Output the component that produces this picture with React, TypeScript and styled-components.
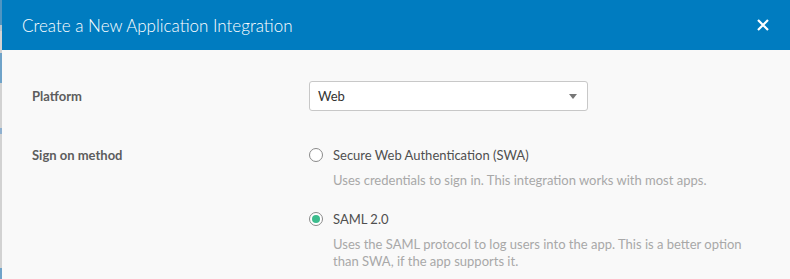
import { createGlobalStyle } from "styled-components";
import styled from "styled-components";

const GlobalStyle = createGlobalStyle`
  html, body {
    margin: 0;
    padding: 0;
    background: #f9f9f9;
    font-family: Lato, "Liberation Sans", sans-serif;
  }
`;

const Page = styled.div`
  display: flex;
  height: 279px;
  overflow: hidden;
`;

const Backdrop = styled.div`
  width: 2px;
  flex: none;
  background: linear-gradient(
    #4f95c2 0 25px,
    #b9c3cb 25px 31px,
    #d2d2d2 31px 53px,
    #6fa3c9 53px 83px,
    #d2d2d2 83px 128px,
    #8fb0cf 128px 134px,
    #d2d2d2 134px 268px,
    #6fa3c9 268px
  );
`;

const Modal = styled.section`
  flex: 1;
  display: flex;
  flex-direction: column;
  background: #f9f9f9;
`;

const Header = styled.header`
  height: 50px;
  flex: none;
  box-sizing: border-box;
  display: flex;
  align-items: center;
  justify-content: space-between;
  padding: 0 20px;
  background: #007cc0;
  color: #fff;
`;

const Title = styled.h1`
  margin: 0;
  font-size: 17px;
  font-weight: 300;
`;

const Close = styled.button`
  border: 0;
  background: none;
  padding: 0;
  width: 14px;
  height: 14px;
  display: flex;
  cursor: pointer;
`;

const Body = styled.div`
  padding: 31px 30px 0;
  display: grid;
  grid-template-columns: 277px 1fr;
  row-gap: 36px;
  align-items: start;
`;

const Label = styled.div<{ $top: number }>`
  padding-top: ${(p) => p.$top}px;
  font-size: 13px;
  line-height: 16px;
  font-weight: 700;
  color: #5d5d5d;
`;

const Select = styled.div`
  width: 279px;
  height: 30px;
  box-sizing: border-box;
  border: 1px solid #c8c8c8;
  border-radius: 3px;
  background: #fff;
  display: flex;
  align-items: center;
  justify-content: space-between;
  padding: 0 10px 0 8px;
  font-size: 13px;
  color: #333;
`;

const Caret = styled.span`
  width: 0;
  height: 0;
  border-left: 4px solid transparent;
  border-right: 4px solid transparent;
  border-top: 5px solid #777;
`;

const Options = styled.div`
  display: flex;
  flex-direction: column;
  gap: 22px;
`;

const Option = styled.label`
  display: grid;
  grid-template-columns: 24px 1fr;
  row-gap: 9px;
  align-items: center;
`;

const Radio = styled.span<{ $checked?: boolean }>`
  width: 14px;
  height: 14px;
  box-sizing: border-box;
  border-radius: 50%;
  border: 1px solid #8a8a8a;
  background: #fff;
  display: flex;
  align-items: center;
  justify-content: center;
  &::after {
    content: "";
    width: 8px;
    height: 8px;
    border-radius: 50%;
    background: ${(p) => (p.$checked ? "#3cbc8d" : "transparent")};
  }
`;

const OptionTitle = styled.span`
  font-size: 13px;
  line-height: 16px;
  color: #4f4f4f;
`;

const Description = styled.p`
  grid-column: 2;
  margin: 0;
  max-width: 420px;
  font-size: 13px;
  line-height: 17px;
  color: #a8a8a8;
`;

const options = [
  {
    title: "Secure Web Authentication (SWA)",
    text: "Uses credentials to sign in. This integration works with most apps.",
    checked: false,
  },
  {
    title: "SAML 2.0",
    text: "Uses the SAML protocol to log users into the app. This is a better option than SWA, if the app supports it.",
    checked: true,
  },
];

export default function App() {
  return (
    <Page>
      <GlobalStyle />
      <Backdrop />
      <Modal>
        <Header>
          <Title>Create a New Application Integration</Title>
          <Close aria-label="Close">
            <svg width="14" height="14" viewBox="0 0 14 14">
              <path d="M2 2L12 12M12 2L2 12" stroke="#fff" strokeWidth="2.2" />
            </svg>
          </Close>
        </Header>
        <Body>
          <Label $top={7}>Platform</Label>
          <Select>
            Web
            <Caret />
          </Select>
          <Label $top={0}>Sign on method</Label>
          <Options>
            {options.map((o) => (
              <Option key={o.title}>
                <Radio $checked={o.checked} />
                <OptionTitle>{o.title}</OptionTitle>
                <Description>{o.text}</Description>
              </Option>
            ))}
          </Options>
        </Body>
      </Modal>
    </Page>
  );
}
